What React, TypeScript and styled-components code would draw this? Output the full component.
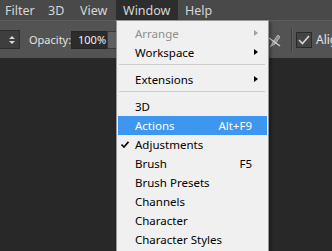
import React from "react";
import styled, { createGlobalStyle } from "styled-components";

const Global = createGlobalStyle`
  html, body { margin: 0; padding: 0; background: #282828; }
  body { font-family: "Noto Sans", "Open Sans", sans-serif; }
`;

const Screen = styled.div`
  position: relative;
  width: 332px;
  height: 251px;
  overflow: hidden;
  display: flex;
  flex-direction: column;
  background: #282828;
`;

const MenuBar = styled.div`
  height: 20px;
  display: flex;
  align-items: stretch;
  background: #494949;
`;

const BarItem = styled.div<{ $active?: boolean; $pl: number; $w: number }>`
  display: flex;
  align-items: center;
  box-sizing: border-box;
  width: ${(p) => p.$w}px;
  padding-left: ${(p) => p.$pl}px;
  font-size: 12.5px;
  color: #d6d6d6;
  white-space: nowrap;
  background: ${(p) => (p.$active ? "#2d2d2d" : "transparent")};
`;

const Toolbar = styled.div`
  height: 38px;
  display: flex;
  align-items: center;
  background: #535353;
  border-top: 1px solid #5c5c5c;
  box-sizing: border-box;
  overflow: hidden;
  & > * {
    flex-shrink: 0;
  }
`;

const Dropdown = styled.div`
  width: 20px;
  height: 19px;
  box-sizing: border-box;
  background: #3e3e3e;
  border: 1px solid #2e2e2e;
  border-left: none;
  display: flex;
  align-items: center;
  justify-content: flex-end;
  padding-right: 4px;
`;

const Label = styled.span`
  font-size: 11px;
  color: #e2e2e2;
  margin-left: 9px;
  width: 42px;
`;

const Input = styled.div`
  width: 36px;
  height: 18px;
  box-sizing: border-box;
  background: #2c2c2c;
  border: 1px solid #262626;
  color: #f0f0f0;
  font-size: 11px;
  display: flex;
  align-items: center;
  padding-left: 6px;
`;

const SpinBox = styled.div`
  width: 10px;
  height: 18px;
  background: #5f5f5f;
  border: 1px solid #3a3a3a;
  box-sizing: border-box;
`;

const PenIcon = styled.svg`
  margin-left: 149px;
`;

const Divider = styled.div`
  width: 1px;
  height: 22px;
  background: #3a3a3a;
  border-right: 1px solid #5e5e5e;
  margin: 0 3px 0 9px;
`;

const Check = styled.div`
  width: 16px;
  height: 16px;
  box-sizing: border-box;
  background: #444;
  border: 1px solid #2a2a2a;
  display: flex;
  align-items: center;
  justify-content: center;
`;

const AlignLabel = styled.span`
  font-size: 12px;
  color: #e6e6e6;
  margin-left: 4px;
  white-space: nowrap;
`;

const Canvas = styled.div`
  flex: 1;
  background: #282828;
`;

const Menu = styled.div`
  position: absolute;
  left: 116px;
  top: 20px;
  width: 153px;
  height: 240px;
  box-sizing: border-box;
  background: #f0f0f0;
  border: 1px solid #979797;
  padding: 3px 1px 0 1px;
  box-shadow: 2px 2px 3px rgba(0, 0, 0, 0.35);
  font-size: 11.5px;
`;

const Item = styled.div<{ $hl?: boolean; $disabled?: boolean }>`
  position: relative;
  height: 19px;
  display: flex;
  align-items: center;
  padding-left: 17px;
  padding-right: 15px;
  color: ${(p) => (p.$hl ? "#ffffff" : p.$disabled ? "#8e8e8e" : "#000000")};
  background: ${(p) => (p.$hl ? "#3d97f0" : "transparent")};
`;

const ItemText = styled.span`
  flex: 1;
  white-space: nowrap;
`;

const Shortcut = styled.span`
  white-space: nowrap;
`;

const Arrow = styled.span<{ $disabled?: boolean }>`
  position: absolute;
  right: 9px;
  top: 6px;
  width: 0;
  height: 0;
  border-top: 3.5px solid transparent;
  border-bottom: 3.5px solid transparent;
  border-left: 4px solid ${(p) => (p.$disabled ? "#a0a0a0" : "#000")};
`;

const CheckMark = styled.svg`
  position: absolute;
  left: 3px;
  top: 6px;
`;

const Separator = styled.div`
  height: 1px;
  background: #cdcdcd;
  margin: 2px 2px 5px 1px;
`;

export default function App() {
  return (
    <>
      <Global />
      <Screen>
        <MenuBar>
          <BarItem $pl={5} $w={41}>Filter</BarItem>
          <BarItem $pl={7} $w={32}>3D</BarItem>
          <BarItem $pl={7} $w={43}>View</BarItem>
          <BarItem $pl={7} $w={62} $active>
            Window
          </BarItem>
          <BarItem $pl={7} $w={50}>Help</BarItem>
        </MenuBar>
        <Toolbar>
          <Dropdown>
            <svg width="6" height="10" viewBox="0 0 6 10">
              <path d="M0 4 L3 1 L6 4 Z M0 6 L3 9 L6 6 Z" fill="#d8d8d8" />
            </svg>
          </Dropdown>
          <Label>Opacity:</Label>
          <Input>100%</Input>
          <SpinBox />
          <PenIcon width="16" height="16" viewBox="0 0 16 16">
            <path d="M5 14 L7 10 L12 3 L14 5 L9 12 Z" fill="#8e8e8e" stroke="#c8c8c8" strokeWidth="0.8" />
            <path d="M4 15 L5 14" stroke="#c8c8c8" strokeWidth="1" />
            <path d="M3 6 L14 14" stroke="#d4d4d4" strokeWidth="1.2" />
          </PenIcon>
          <Divider />
          <Check>
            <svg width="12" height="10" viewBox="0 0 12 10">
              <path d="M1 5 L4.5 8.5 L11 1" fill="none" stroke="#d8d8d8" strokeWidth="1.6" />
            </svg>
          </Check>
          <AlignLabel>Align</AlignLabel>
        </Toolbar>
        <Canvas />
        <Menu>
          <Item $disabled>
            <ItemText>Arrange</ItemText>
            <Arrow $disabled />
          </Item>
          <Item>
            <ItemText>Workspace</ItemText>
            <Arrow />
          </Item>
          <Separator />
          <Item>
            <ItemText>Extensions</ItemText>
            <Arrow />
          </Item>
          <Separator />
          <Item>
            <ItemText>3D</ItemText>
          </Item>
          <Item $hl>
            <ItemText>Actions</ItemText>
            <Shortcut>Alt+F9</Shortcut>
          </Item>
          <Item>
            <CheckMark width="8" height="7" viewBox="0 0 8 7">
              <path d="M0.5 3.5 L3 6 L7.5 0.8" fill="none" stroke="#000" strokeWidth="1.6" />
            </CheckMark>
            <ItemText>Adjustments</ItemText>
          </Item>
          <Item>
            <ItemText>Brush</ItemText>
            <Shortcut>F5</Shortcut>
          </Item>
          <Item>
            <ItemText>Brush Presets</ItemText>
          </Item>
          <Item>
            <ItemText>Channels</ItemText>
          </Item>
          <Item>
            <ItemText>Character</ItemText>
          </Item>
          <Item>
            <ItemText>Character Styles</ItemText>
          </Item>
        </Menu>
      </Screen>
    </>
  );
}
